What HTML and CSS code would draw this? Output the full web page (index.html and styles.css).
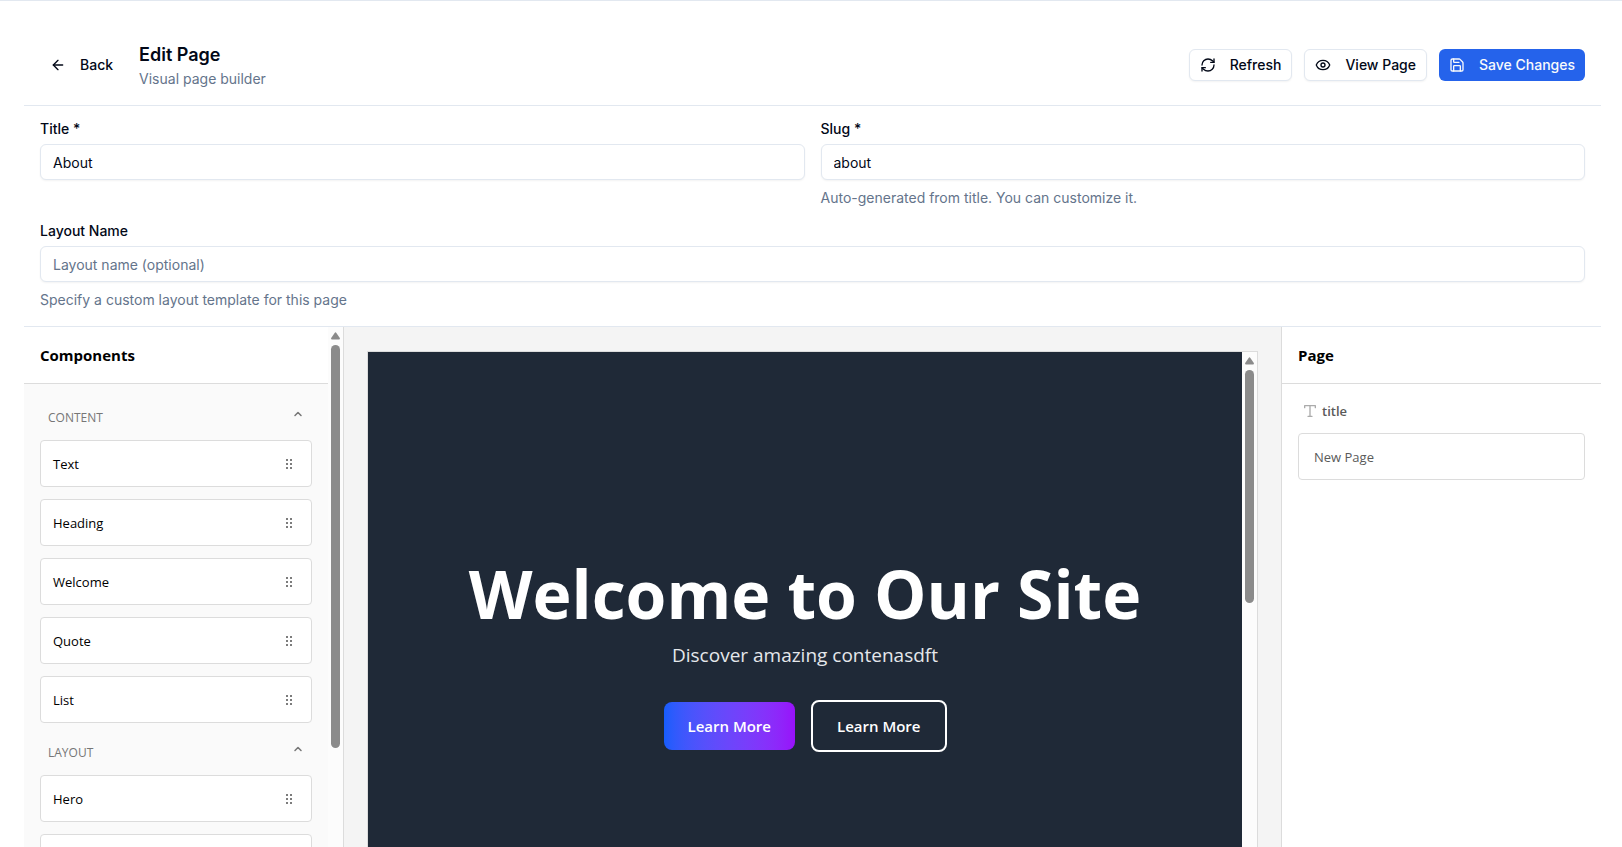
FILE: index.html
```html
<!DOCTYPE html>
<html lang="en">
<head>
<meta charset="utf-8">
<meta name="viewport" content="width=device-width, initial-scale=1">
<title>Edit Page</title>
<link rel="stylesheet" href="styles.css">
</head>
<body>
<svg class="defs" aria-hidden="true">
  <symbol id="grip" viewBox="0 0 12 12"><path d="M3 1h2v2H3zM7 1h2v2H7zM3 5h2v2H3zM7 5h2v2H7zM3 9h2v2H3zM7 9h2v2H7z"/></symbol>
  <symbol id="chevron-up" viewBox="0 0 24 24"><path d="m18 15-6-6-6 6"/></symbol>
</svg>
<div class="app">
  <header class="topbar">
    <div class="topbar-left">
      <button class="btn btn-ghost" type="button">
        <svg class="icon" viewBox="0 0 24 24"><path d="m12 19-7-7 7-7"/><path d="M19 12H5"/></svg>
        Back
      </button>
      <div>
        <h1 class="page-title">Edit Page</h1>
        <p class="muted">Visual page builder</p>
      </div>
    </div>
    <div class="topbar-actions">
      <button class="btn btn-outline" type="button">
        <svg class="icon" viewBox="0 0 24 24"><path d="M3 12a9 9 0 0 1 9-9 9.75 9.75 0 0 1 6.74 2.74L21 8"/><path d="M21 3v5h-5"/><path d="M21 12a9 9 0 0 1-9 9 9.75 9.75 0 0 1-6.74-2.74L3 16"/><path d="M8 16H3v5"/></svg>
        Refresh
      </button>
      <button class="btn btn-outline" type="button">
        <svg class="icon" viewBox="0 0 24 24"><path d="M2.062 12.348a1 1 0 0 1 0-.696 10.75 10.75 0 0 1 19.876 0 1 1 0 0 1 0 .696 10.75 10.75 0 0 1-19.876 0"/><circle cx="12" cy="12" r="3"/></svg>
        View Page
      </button>
      <button class="btn btn-primary" type="button">
        <svg class="icon" viewBox="0 0 24 24"><path d="M15.2 3a2 2 0 0 1 1.4.6l3.8 3.8a2 2 0 0 1 .6 1.4V19a2 2 0 0 1-2 2H5a2 2 0 0 1-2-2V5a2 2 0 0 1 2-2z"/><path d="M17 21v-7a1 1 0 0 0-1-1H8a1 1 0 0 0-1 1v7"/><path d="M7 3v4a1 1 0 0 0 1 1h7"/></svg>
        Save Changes
      </button>
    </div>
  </header>

  <form class="settings">
    <div class="field">
      <label for="title">Title *</label>
      <input id="title" type="text" value="About">
    </div>
    <div class="field">
      <label for="slug">Slug *</label>
      <input id="slug" type="text" value="about">
      <p class="muted">Auto-generated from title. You can customize it.</p>
    </div>
    <div class="field field-wide">
      <label for="layout">Layout Name</label>
      <input id="layout" type="text" placeholder="Layout name (optional)">
      <p class="muted">Specify a custom layout template for this page</p>
    </div>
  </form>

  <main class="builder">
    <aside class="components">
      <div class="components-main">
        <h2 class="panel-title">Components</h2>
        <div class="drawer">
          <section class="category">
            <button class="category-toggle" type="button">CONTENT<svg class="chevron"><use href="#chevron-up"/></svg></button>
            <ul class="items">
              <li class="item">Text<svg class="grip"><use href="#grip"/></svg></li>
              <li class="item">Heading<svg class="grip"><use href="#grip"/></svg></li>
              <li class="item">Welcome<svg class="grip"><use href="#grip"/></svg></li>
              <li class="item">Quote<svg class="grip"><use href="#grip"/></svg></li>
              <li class="item">List<svg class="grip"><use href="#grip"/></svg></li>
            </ul>
          </section>
          <section class="category">
            <button class="category-toggle" type="button">LAYOUT<svg class="chevron"><use href="#chevron-up"/></svg></button>
            <ul class="items">
              <li class="item">Hero<svg class="grip"><use href="#grip"/></svg></li>
              <li class="item"></li>
            </ul>
          </section>
        </div>
      </div>
      <div class="scrollbar">
        <svg class="scroll-arrow" viewBox="0 0 9 8"><path d="M3.6.9Q4.5-.3 5.4.9L8.8 6Q9.3 7.5 8 7.5H1Q-.3 7.5.2 6z"/></svg>
        <div class="thumb thumb-components"></div>
      </div>
    </aside>

    <div class="canvas">
      <div class="preview">
        <section class="hero">
          <h2 class="hero-title">Welcome to Our Site</h2>
          <p class="hero-text">Discover amazing contenasdft</p>
          <div class="hero-actions">
            <a class="cta cta-filled" href="#">Learn More</a>
            <a class="cta cta-outline" href="#">Learn More</a>
          </div>
        </section>
        <div class="scrollbar">
          <svg class="scroll-arrow" viewBox="0 0 9 8"><path d="M3.6.9Q4.5-.3 5.4.9L8.8 6Q9.3 7.5 8 7.5H1Q-.3 7.5.2 6z"/></svg>
          <div class="thumb thumb-preview"></div>
        </div>
      </div>
    </div>

    <aside class="inspector">
      <h2 class="panel-title">Page</h2>
      <div class="inspector-body">
        <label class="prop-label" for="page-title">
          <svg class="type-icon" viewBox="0 0 24 24"><path d="M4 7V4h16v3"/><path d="M9 20h6"/><path d="M12 4v16"/></svg>
          title
        </label>
        <input class="prop-input" id="page-title" type="text" value="New Page">
      </div>
    </aside>
  </main>
</div>
</body>
</html>
```

FILE: styles.css
```css
* {
  box-sizing: border-box;
}

body,
h1,
h2,
p,
ul {
  margin: 0;
  padding: 0;
}

body {
  background: #fff;
  color: #020817;
  font-family: Inter, "Liberation Sans", sans-serif;
  font-size: 14px;
  line-height: 20px;
}

button,
input {
  font: inherit;
  color: inherit;
}

.defs {
  display: none;
}

.app {
  display: flex;
  flex-direction: column;
  height: 100vh;
  padding: 24px 21px 0 24px;
  border-top: 1px solid #e2e8f0;
  overflow: hidden;
}

/* Top bar */
.topbar {
  display: flex;
  justify-content: space-between;
  align-items: center;
  padding: 16px;
  border-bottom: 1px solid #e2e8f0;
}

.topbar-left {
  display: flex;
  align-items: center;
  gap: 16px;
}

.topbar-actions {
  display: flex;
  gap: 12px;
}

.page-title {
  font-size: 18px;
  font-weight: 600;
  line-height: 28px;
}

.muted {
  color: #64748b;
}

.btn {
  display: inline-flex;
  align-items: center;
  gap: 14px;
  height: 32px;
  padding: 0 10px;
  border: 0;
  border-radius: 6px;
  background: #fff;
  font-weight: 500;
}

.btn-outline {
  border: 1px solid #e2e8f0;
  box-shadow: 0 1px 2px rgba(0, 0, 0, 0.05);
}

.btn-primary {
  background: #2563eb;
  color: #f8fafc;
}

.icon {
  width: 16px;
  height: 16px;
  fill: none;
  stroke: currentColor;
  stroke-width: 2;
  stroke-linecap: round;
  stroke-linejoin: round;
}

/* Page settings */
.settings {
  display: grid;
  grid-template-columns: 1fr 1fr;
  gap: 16px;
  padding: 16px;
  border-bottom: 1px solid #e2e8f0;
}

.field {
  display: flex;
  flex-direction: column;
  gap: 8px;
}

.field-wide {
  grid-column: 1 / -1;
}

.field label {
  font-weight: 500;
  line-height: 14px;
}

.field input {
  width: 100%;
  height: 36px;
  padding: 4px 12px;
  border: 1px solid #e2e8f0;
  border-radius: 6px;
  background: #fff;
  box-shadow: 0 1px 2px rgba(0, 0, 0, 0.05);
}

.field input::placeholder {
  color: #64748b;
  opacity: 1;
}

/* Builder */
.builder {
  display: grid;
  grid-template-columns: 320px 1fr 320px;
  flex: 1;
  min-height: 0;
  color: #000;
  font-family: "Open Sans", "Noto Sans", sans-serif;
  font-size: 13px;
}

.panel-title {
  padding: 16px;
  border-bottom: 1px solid #dcdcdc;
  background: #fff;
  font-size: 15px;
  font-weight: 700;
  line-height: 24px;
}

.components {
  display: flex;
  border-right: 1px solid #dcdcdc;
  background: #fafafa;
  overflow: hidden;
}

.components-main {
  flex: 1;
}

.drawer {
  display: flex;
  flex-direction: column;
  gap: 12px;
  padding: 16px;
}

.category-toggle {
  display: flex;
  justify-content: space-between;
  align-items: center;
  width: 100%;
  height: 36px;
  margin-bottom: 4px;
  padding: 8px;
  border: 0;
  background: transparent;
  color: #767676;
  font-size: 12px;
}

.chevron {
  align-self: flex-start;
  width: 12px;
  height: 12px;
  fill: none;
  stroke: #767676;
  stroke-width: 3;
  stroke-linecap: round;
  stroke-linejoin: round;
}

.items {
  display: flex;
  flex-direction: column;
  gap: 12px;
  list-style: none;
}

.item {
  display: flex;
  justify-content: space-between;
  align-items: center;
  height: 47px;
  padding: 0 16px 0 12px;
  border: 1px solid #dcdcdc;
  border-radius: 4px;
  background: #fff;
}

.grip {
  width: 12px;
  height: 12px;
  fill: #7c7c7c;
}

.scrollbar {
  display: flex;
  flex-direction: column;
  align-items: center;
  gap: 5px;
  flex: 0 0 15px;
  padding-top: 5px;
  background: #fcfcfc;
}

.scroll-arrow {
  width: 9px;
  height: 8px;
  fill: #8b8b8b;
}

.thumb {
  width: 9px;
  border-radius: 5px;
  background: #8b8b8b;
}

.thumb-components {
  height: 403px;
}

.thumb-preview {
  height: 233px;
}

/* Preview canvas */
.canvas {
  display: flex;
  padding: 24px 23px 0;
  background: #f4f4f4;
  overflow: hidden;
}

.preview {
  display: flex;
  flex: 1;
  border: 1px solid #dcdcdc;
  border-bottom: 0;
}

.hero {
  display: flex;
  flex-direction: column;
  flex: 1;
  align-items: center;
  padding-top: 204px;
  background: #1f2937;
  color: #fff;
  text-align: center;
}

.hero-title {
  font-size: 66px;
  font-weight: 700;
  line-height: 74px;
}

.hero-text {
  margin: 11px 0 31px;
  color: #e5e7eb;
  font-size: 19px;
  line-height: 28px;
}

.hero-actions {
  display: flex;
  align-items: center;
  gap: 16px;
}

.cta {
  padding: 12px 24px;
  border-radius: 8px;
  color: #fff;
  font-size: 15px;
  font-weight: 600;
  line-height: 24px;
  text-decoration: none;
}

.cta-filled {
  background: linear-gradient(to right in oklab, #155dfc, #9810fa);
}

.cta-outline {
  border: 2px solid #fff;
}

/* Inspector */
.inspector {
  border-left: 1px solid #dcdcdc;
  background: #fff;
}

.inspector-body {
  padding: 16px;
}

.prop-label {
  display: flex;
  align-items: center;
  gap: 4px;
  margin-bottom: 11px;
  padding-left: 4px;
  color: #5a5a5a;
  font-weight: 600;
  line-height: 22px;
}

.type-icon {
  width: 16px;
  height: 16px;
  fill: none;
  stroke: #ababab;
  stroke-width: 2;
  stroke-linecap: round;
  stroke-linejoin: round;
}

.prop-input {
  width: 100%;
  height: 47px;
  padding: 0 15px;
  border: 1px solid #dcdcdc;
  border-radius: 4px;
  background: #fff;
  color: #5a5a5a;
}
```
